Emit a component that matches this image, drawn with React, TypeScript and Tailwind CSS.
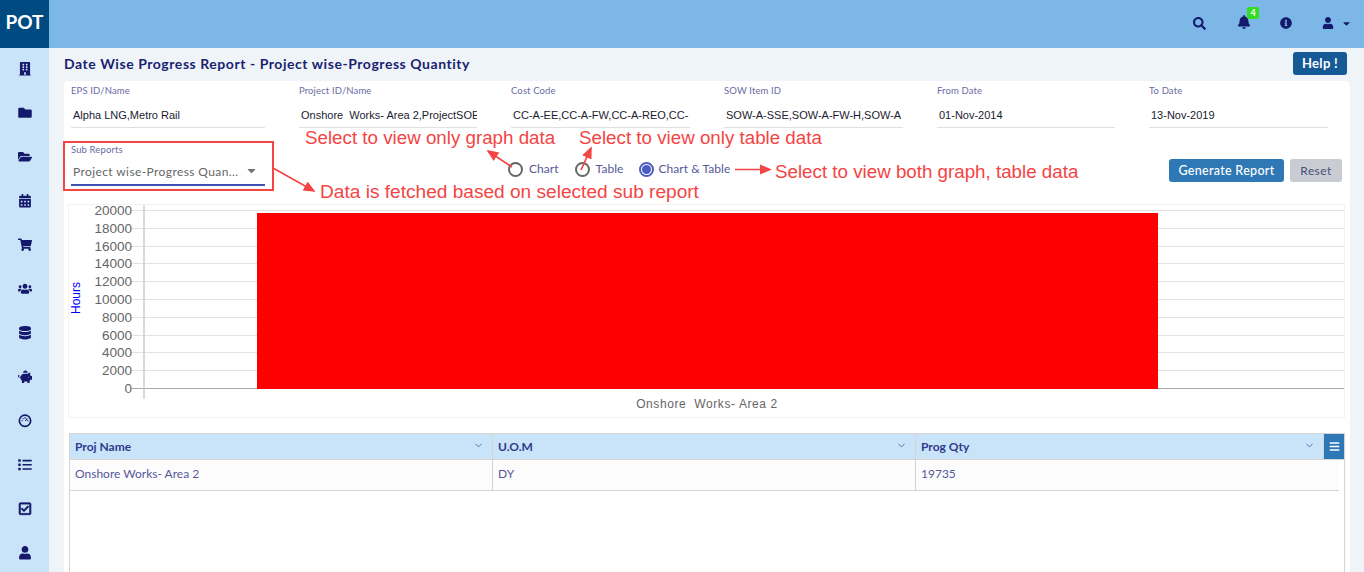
import {
  FaBars,
  FaBell,
  FaBuilding,
  FaCalendarAlt,
  FaCaretDown,
  FaDatabase,
  FaFolder,
  FaFolderOpen,
  FaInfoCircle,
  FaList,
  FaPiggyBank,
  FaRegCheckSquare,
  FaSearch,
  FaShoppingCart,
  FaUser,
  FaUsers,
} from "react-icons/fa";
import { FiChevronDown } from "react-icons/fi";

// Dial del sidebar, el paquete no trae uno igual
function DialIcon({ className }: { className?: string }) {
  return (
    <svg viewBox="0 0 16 16" className={className} fill="none" stroke="currentColor">
      <circle cx="8" cy="8" r="6.7" strokeWidth="2" />
      <path d="M8 3.6v1.6M4 8h1.4M10.6 8H12M5.2 5.2l1 1M10.8 5.2 8.4 8" strokeWidth="1.3" />
    </svg>
  );
}

// El check de la referencia tiene el trazo mas grueso
function BoldCheckIcon({ className }: { className?: string }) {
  return <FaRegCheckSquare className={`${className} stroke-[28px]`} />;
}

const sideIcons = [
  FaBuilding,
  FaFolder,
  FaFolderOpen,
  FaCalendarAlt,
  FaShoppingCart,
  FaUsers,
  FaDatabase,
  FaPiggyBank,
  DialIcon,
  FaList,
  BoldCheckIcon,
  FaUser,
];

const filters = [
  { label: "EPS ID/Name", value: "Alpha LNG,Metro Rail", width: "w-[194px]" },
  { label: "Project ID/Name", value: "Onshore  Works- Area 2,ProjectSOE", width: "w-[178px]" },
  { label: "Cost Code", value: "CC-A-EE,CC-A-FW,CC-A-REO,CC-", width: "w-[179px]" },
  { label: "SOW Item ID", value: "SOW-A-SSE,SOW-A-FW-H,SOW-A", width: "w-[179px]" },
  { label: "From Date", value: "01-Nov-2014", width: "w-[178px]" },
  { label: "To Date", value: "13-Nov-2019", width: "w-[179px]" },
];

const ticks = [
  { label: "20000", y: 210 },
  { label: "18000", y: 228 },
  { label: "16000", y: 246 },
  { label: "14000", y: 263 },
  { label: "12000", y: 281 },
  { label: "10000", y: 299 },
  { label: "8000", y: 317 },
  { label: "6000", y: 335 },
  { label: "4000", y: 352 },
  { label: "2000", y: 370 },
  { label: "0", y: 388 },
];

function Radio({ label, checked }: { label: string; checked?: boolean }) {
  return (
    <div className={checked ? "flex items-center gap-[4px]" : "flex items-center gap-[6px]"}>
      {checked ? (
        <span className="flex h-[15px] w-[15px] items-center justify-center rounded-full border-2 border-[#4a5cc0]">
          <span className="h-[9px] w-[9px] rounded-full bg-[#4a5cc0]" />
        </span>
      ) : (
        <span className="h-[15px] w-[15px] rounded-full border-2 border-[#666666]" />
      )}
      <span className="text-[12px] tracking-[0.05px] text-[#55589a]">{label}</span>
    </div>
  );
}

function Chart() {
  return (
    <div className="mt-[13px] ml-[4px] h-[214px] w-[1277px] border border-[#f2f2f2]">
      {/* coordenadas del svg: x-69, y-205 */}
      <svg width="1275" height="212" viewBox="69 205 1275 212" className="block overflow-visible">
        {ticks.map((t) => (
          <g key={t.label}>
            <line x1="132" x2="1344" y1={t.y + 0.5} y2={t.y + 0.5} stroke={t.label === "0" ? "#a8a8a8" : "#e2e2e2"} />
            <text
              x="132"
              y={t.y + 5}
              textAnchor="end"
              fontFamily="Liberation Sans, Arial, sans-serif"
              fontSize="13.5"
              fill="#666666"
            >
              {t.label}
            </text>
          </g>
        ))}
        <line x1="144" x2="144" y1="205" y2="399" stroke="#cccccc" strokeWidth="1.5" />
        <rect x="257" y="213" width="901" height="176" fill="#ff0000" />
        <text
          x="707"
          y="408"
          textAnchor="middle"
          xmlSpace="preserve"
          fontFamily="Liberation Sans, Arial, sans-serif"
          fontSize="12"
          letterSpacing="0.6"
          fill="#666666"
        >
          Onshore  Works- Area 2
        </text>
        <text
          transform="translate(79.5 298) rotate(-90)"
          textAnchor="middle"
          fontFamily="Liberation Sans, Arial, sans-serif"
          fontSize="12"
          fill="#0000ff"
        >
          Hours
        </text>
      </svg>
    </div>
  );
}

function Th({ label, width }: { label: string; width: string }) {
  return (
    <div className={`${width} flex h-full items-center justify-between border-r border-[#d4d4d4] pr-[8px] pl-[5px]`}>
      <span className="text-[12px] font-bold text-[#2f3a8c]">{label}</span>
      <FiChevronDown className="mb-[3px] text-[11px] text-[#5a62a8]" />
    </div>
  );
}

function Td({ label, width }: { label: string; width: string }) {
  return (
    <div className={`${width} flex h-full items-start border-r border-[#d4d4d4] pt-[5px] pl-[5px]`}>
      <span className="text-[12px] text-[#55589a]">{label}</span>
    </div>
  );
}

export default function App() {
  return (
    <div className="relative flex h-[572px] w-[1364px] flex-col overflow-hidden bg-[#eff4f8] font-['Lato',sans-serif]">
      {/* HEADER */}
      <header className="flex h-12 shrink-0 items-center bg-[#7cb7e8]">
        <div className="flex h-12 w-[49px] items-center justify-center bg-[#004a82] pb-[3px] text-[19px] font-bold text-white">
          POT
        </div>
        <div className="relative ml-auto flex h-full items-center text-[#14196b]">
          <FaSearch className="absolute left-[-171px] top-[17px] text-[13px]" />
          <FaBell className="absolute left-[-127px] top-[15px] text-[14px]" />
          <span className="absolute left-[-117px] top-[7px] flex h-[12px] w-[12px] items-center justify-center rounded-[2px] bg-[#33dd22] text-[9px] font-bold text-white">
            4
          </span>
          <FaInfoCircle className="absolute left-[-84px] top-[17px] text-[12px]" />
          <FaUser className="absolute left-[-42px] top-[17px] text-[12px]" />
          <FaCaretDown className="absolute left-[-23px] top-[18px] text-[11px]" />
        </div>
      </header>

      <div className="flex min-h-0 flex-1">
        {/* SIDEBAR */}
        <aside className="flex w-[49px] shrink-0 flex-col items-center gap-[28px] bg-[#c9e4f9] pt-[13px] text-[#14196b]">
          {sideIcons.map((Icon, i) => (
            <div key={i} className="flex h-4 shrink-0 items-center justify-center">
              <Icon className="h-[13.5px] w-[14px]" />
            </div>
          ))}
        </aside>

        {/* CONTENIDO */}
        <main className="flex min-w-0 flex-1 flex-col pr-[14px] pl-[15px]">
          <div className="flex h-[33px] shrink-0 items-center justify-between pr-[3px]">
            <h1 className="mb-[2px] text-[14px] font-bold tracking-[0.55px] text-[#1a1f71]">
              Date Wise Progress Report - Project wise-Progress Quantity
            </h1>
            <button className="mt-[-2px] h-[23px] w-[54px] rounded-[3px] bg-[#155a96] text-[13px] font-bold tracking-[0.3px] text-white">
              Help !
            </button>
          </div>

          <section className="min-h-0 flex-1 rounded-t-[4px] bg-white">
            {/* FILTROS */}
            <div className="flex gap-[34px] pt-[4px] pl-[7px]">
              {filters.map((f) => (
                <div key={f.label} className={`${f.width} h-[43px] border-b border-[#e0e0e0]`}>
                  <p className="text-[9.5px] leading-[12px] tracking-[0.12px] text-[#6b6ba3]">{f.label}</p>
                  <p className="mt-[11px] overflow-hidden pl-[2px] font-['Liberation_Sans',sans-serif] text-[11px] leading-[14px] whitespace-pre text-[#1b1b2f]">
                    {f.value}
                  </p>
                </div>
              ))}
            </div>

            <div className="flex h-[63px] pl-[7px]">
              <div className="mt-[16px] h-[43px] w-[194px]">
                <p className="text-[9.5px] leading-[12px] tracking-[0.12px] text-[#6b6ba3]">Sub Reports</p>
                <div className="mt-[4px] flex h-[26px] items-center justify-between border-b-2 border-[#3f51b5] pr-[7px] pl-[2px]">
                  <span className="text-[12px] tracking-[0.4px] text-[#666666]">Project wise-Progress Quan...</span>
                  <FaCaretDown className="mb-[3px] text-[13px] text-[#757575]" />
                </div>
              </div>
              <div className="mt-[21px] ml-[243px] flex h-[40px] items-center gap-[16px] self-start">
                <Radio label="Chart" />
                <Radio label="Table" />
                <Radio label="Chart & Table" checked />
              </div>
              <div className="mt-[31px] ml-auto flex h-[23px] gap-[6px] pr-[8px]">
                <button className="w-[115px] rounded-[3px] bg-[#2e78b5] pt-[1px] text-[12.5px] font-medium tracking-[0.3px] text-white">
                  Generate Report
                </button>
                <button className="w-[52px] rounded-[3px] bg-[#c9ccd3] pt-[1px] text-[12px] tracking-[0.4px] text-[#4a4f7a]">
                  Reset
                </button>
              </div>
            </div>

            <Chart />

            {/* TABLA */}
            <div className="mt-[15px] ml-[5px] h-[200px] w-[1276px] border-x border-t border-[#d4d4d4]">
              <div className="flex h-[26px] border-b border-[#d4d4d4] bg-[#c9e4f9]">
                <Th label="Proj Name" width="w-[423px]" />
                <Th label="U.O.M" width="w-[423px]" />
                <Th label="Prog Qty" width="w-[408px]" />
                <div className="ml-auto flex w-[20px] items-center justify-center bg-[#2e78b5] text-[11px] text-white">
                  <FaBars />
                </div>
              </div>
              <div className="flex h-[31px] w-[1269px] border-b border-[#d4d4d4] bg-[#fcfcfc]">
                <Td label="Onshore Works- Area 2" width="w-[423px]" />
                <Td label="DY" width="w-[423px]" />
                <div className="pt-[5px] pl-[5px] text-[12px] text-[#55589a]">19735</div>
              </div>
            </div>
          </section>
        </main>
      </div>

      {/* ANOTACIONES sobre la captura */}
      <div className="pointer-events-none absolute top-[141px] left-[63px] h-[50px] w-[211px] border-2 border-[#f44444]" />
      <svg className="pointer-events-none absolute top-0 left-0" width="1364" height="572" fill="none">
        <defs>
          <marker id="head" markerWidth="8" markerHeight="8" refX="6" refY="3" orient="auto">
            <path d="M0 0 L7 3 L0 6 Z" fill="#f44444" />
          </marker>
        </defs>
        <g stroke="#f44444" strokeWidth="1.7">
          <line x1="512" y1="167" x2="488" y2="151" markerEnd="url(#head)" />
          <line x1="581" y1="170" x2="591" y2="148" markerEnd="url(#head)" />
          <line x1="273" y1="168" x2="314" y2="191" markerEnd="url(#head)" />
          <line x1="735" y1="169.5" x2="770" y2="169.5" markerEnd="url(#head)" />
        </g>
      </svg>
      <span className="pointer-events-none absolute top-[127px] left-[305px] font-['Liberation_Sans',sans-serif] text-[18.75px] leading-[21px] text-[#f44444]">
        Select to view only graph data
      </span>
      <span className="pointer-events-none absolute top-[127px] left-[579px] font-['Liberation_Sans',sans-serif] text-[18.75px] leading-[21px] text-[#f44444]">
        Select to view only table data
      </span>
      <span className="pointer-events-none absolute top-[161px] left-[775px] font-['Liberation_Sans',sans-serif] text-[18.75px] leading-[21px] text-[#f44444]">
        Select to view both graph, table data
      </span>
      <span className="pointer-events-none absolute top-[181px] left-[320px] font-['Liberation_Sans',sans-serif] text-[19.1px] leading-[21px] text-[#f44444]">
        Data is fetched based on selected sub report
      </span>
    </div>
  );
}
